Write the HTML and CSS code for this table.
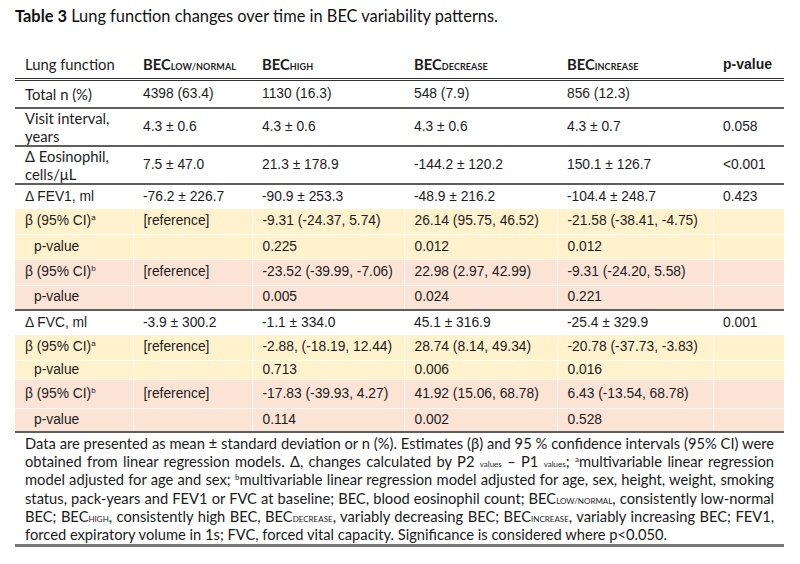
FILE: index.html
```html
<!DOCTYPE html>
<html>
<head>
<meta charset="utf-8">
<link rel="stylesheet" href="styles.css">
</head>
<body>
<div class="page">
  <p class="caption"><b>Table 3</b> Lung function changes over time in BEC variability patterns.</p>
  <table class="tbl">
    <colgroup>
      <col class="c1"><col class="c2"><col class="c3"><col class="c4"><col class="c5"><col class="c6">
    </colgroup>
    <thead>
      <tr class="hrow">
        <th class="lbl">Lung function</th>
        <th class="bec">BEC<span class="sc">low/normal</span></th>
        <th class="bec">BEC<span class="sc">high</span></th>
        <th class="bec">BEC<span class="sc">decrease</span></th>
        <th class="bec">BEC<span class="sc">increase</span></th>
        <th class="pv">p-value</th>
      </tr>
    </thead>
    <tbody>
      <tr class="r-total line">
        <td class="lbl">Total n (%)</td><td>4398 (63.4)</td><td>1130 (16.3)</td><td>548 (7.9)</td><td>856 (12.3)</td><td></td>
      </tr>
      <tr class="r-two line">
        <td class="lbl">Visit interval,<br>years</td><td>4.3 ± 0.6</td><td>4.3 ± 0.6</td><td>4.3 ± 0.6</td><td>4.3 ± 0.7</td><td>0.058</td>
      </tr>
      <tr class="r-two line">
        <td class="lbl">Δ Eosinophil,<br>cells/μL</td><td>7.5 ± 47.0</td><td>21.3 ± 178.9</td><td>-144.2 ± 120.2</td><td>150.1 ± 126.7</td><td>&lt;0.001</td>
      </tr>
      <tr class="r-fev">
        <td>Δ FEV1, ml</td><td>-76.2 ± 226.7</td><td>-90.9 ± 253.3</td><td>-48.9 ± 216.2</td><td>-104.4 ± 248.7</td><td>0.423</td>
      </tr>
      <tr class="yel r-a1 sep">
        <td>β (95% CI)<sup>a</sup></td><td>[reference]</td><td>-9.31 (-24.37, 5.74)</td><td>26.14 (95.75, 46.52)</td><td>-21.58 (-38.41, -4.75)</td><td></td>
      </tr>
      <tr class="yel r-p1 sep">
        <td class="ind">p-value</td><td></td><td>0.225</td><td>0.012</td><td>0.012</td><td></td>
      </tr>
      <tr class="sal r-b1 sep">
        <td>β (95% CI)<sup>b</sup></td><td>[reference]</td><td>-23.52 (-39.99, -7.06)</td><td>22.98 (2.97, 42.99)</td><td>-9.31 (-24.20, 5.58)</td><td></td>
      </tr>
      <tr class="sal r-pb1 line">
        <td class="ind">p-value</td><td></td><td>0.005</td><td>0.024</td><td>0.221</td><td></td>
      </tr>
      <tr class="r-fvc">
        <td>Δ FVC, ml</td><td>-3.9 ± 300.2</td><td>-1.1 ± 334.0</td><td>45.1 ± 316.9</td><td>-25.4 ± 329.9</td><td>0.001</td>
      </tr>
      <tr class="yel r-a2 sep">
        <td>β (95% CI)<sup>a</sup></td><td>[reference]</td><td>-2.88, (-18.19, 12.44)</td><td>28.74 (8.14, 49.34)</td><td>-20.78 (-37.73, -3.83)</td><td></td>
      </tr>
      <tr class="yel r-p2 sep">
        <td class="ind">p-value</td><td></td><td>0.713</td><td>0.006</td><td>0.016</td><td></td>
      </tr>
      <tr class="sal r-b2 sep">
        <td>β (95% CI)<sup>b</sup></td><td>[reference]</td><td>-17.83 (-39.93, 4.27)</td><td>41.92 (15.06, 68.78)</td><td>6.43 (-13.54, 68.78)</td><td></td>
      </tr>
      <tr class="sal r-pb2 line">
        <td class="ind">p-value</td><td></td><td>0.114</td><td>0.002</td><td>0.528</td><td></td>
      </tr>
    </tbody>
    <tfoot>
      <tr>
        <td colspan="6" class="note">
          <span class="ln">Data are presented as mean ± standard deviation or n (%). Estimates (β) and 95 % confidence intervals (95% CI) were</span>
          <span class="ln">obtained from linear regression models. Δ, changes calculated by P2 <span class="tiny">values</span> – P1 <span class="tiny">values</span>; <sup>a</sup>multivariable linear regression</span>
          <span class="ln">model adjusted for age and sex; <sup>b</sup>multivariable linear regression model adjusted for age, sex, height, weight, smoking</span>
          <span class="ln">status, pack-years and FEV1 or FVC at baseline; BEC, blood eosinophil count; BEC<span class="tiny up">low/normal</span>, consistently low-normal</span>
          <span class="ln">BEC; BEC<span class="tiny up">high</span>, consistently high BEC, BEC<span class="tiny up">decrease</span>, variably decreasing BEC; BEC<span class="tiny up">increase</span>, variably increasing BEC; FEV1,</span>
          <span class="ln last">forced expiratory volume in 1s; FVC, forced vital capacity. Significance is considered where p&lt;0.050.</span>
        </td>
      </tr>
    </tfoot>
  </table>
</div>
</body>
</html>
```
FILE: styles.css
```css
html, body {
  margin: 0;
  padding: 0;
  background: #ffffff;
}
.page {
  padding: 5px 0 0 15px;
  width: 769px;
  color: #1a1a1a;
}
.caption {
  margin: 0;
  font-family: "Lato", "Liberation Sans", sans-serif;
  font-size: 16.4px;
  line-height: 21px;
  color: #111;
}
.caption b {
  font-weight: 700;
}
.tbl {
  margin-top: 22px;
  width: 769px;
  border-collapse: collapse;
  table-layout: fixed;
  font-family: "Liberation Sans", Arial, sans-serif;
  font-size: 13.8px;
  color: #1c1c1c;
}
.c1 { width: 118px; }
.c2 { width: 119px; }
.c3 { width: 152px; }
.c4 { width: 153px; }
.c5 { width: 156px; }
.c6 { width: 71px; }
.tbl th, .tbl td {
  padding: 0 0 0 10px;
  text-align: left;
  vertical-align: middle;
  white-space: nowrap;
  line-height: 18px;
}
.hrow {
  height: 31px;
  border-bottom: 3px double #333;
}
.hrow th {
  vertical-align: top;
  padding-top: 7px;
  font-weight: 700;
}
.hrow th.lbl {
  font-family: "Lato", sans-serif;
  font-weight: 400;
  font-size: 14.8px;
}
.bec {
  font-family: "Lato", sans-serif;
  font-size: 14.8px;
  font-weight: 900;
}
.sc {
  text-transform: uppercase;
  font-size: 9px;
  line-height: 1;
  font-weight: 700;
  letter-spacing: 0.1px;
}
.pv {
  font-size: 14px;
}
td.lbl {
  font-family: "Lato", sans-serif;
  font-size: 14.8px;
}
.line {
  border-bottom: 2px solid #5e5e5e;
}
.sep td {
  border-bottom: 1px solid rgba(255, 255, 255, 0.75);
}
.yel td, .sal td {
  border-left: 1px solid rgba(255, 255, 255, 0.6);
}
.yel td:first-child, .sal td:first-child {
  border-left: none;
}
.yel { background: #fff2cc; }
.sal { background: #fbe4d5; }
.tbl td.ind { padding-left: 19px; }
sup {
  font-size: 8px;
  line-height: 0;
  vertical-align: 5px;
}
.r-total { height: 29px; }
.r-two { height: 38px; }
.r-fev { height: 25px; }
.r-a1 { height: 25px; }
.r-p1 { height: 25px; }
.r-b1 { height: 26px; }
.r-pb1 { height: 25px; }
.r-fvc { height: 25px; }
.r-a2 { height: 25px; }
.r-p2 { height: 18px; }
.r-b2 { height: 29px; }
.r-pb2 { height: 24px; }
tfoot tr {
  border-bottom: 3px solid #777;
}
.tbl td.note {
  white-space: normal;
  padding: 1px 10px 1px 10px;
  font-family: "Lato", sans-serif;
  font-size: 14.7px;
  line-height: 18.2px;
  color: #1a1a1a;
}
.ln {
  display: block;
  height: 18.2px;
  overflow: visible;
  text-align: justify;
  text-align-last: justify;
  white-space: nowrap;
}
.ln.last {
  text-align-last: left;
}
.tiny {
  font-size: 8px;
  line-height: 1;
}
.up {
  text-transform: uppercase;
}
```
